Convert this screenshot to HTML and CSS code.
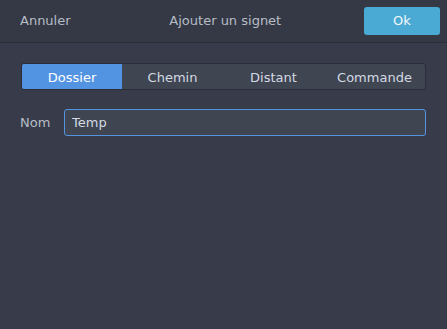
FILE: index.html
```html
<!DOCTYPE html>
<html lang="fr">
<head>
  <meta charset="UTF-8">
  <title>Ajouter un signet</title>
  <link rel="stylesheet" href="styles.css">
</head>
<body>

  <div class="dialogo">
    <div class="cabecera">
      <button class="btn-texto">Annuler</button>
      <div class="titulo">Ajouter un signet</div>
      <button class="btn-ok">Ok</button>
    </div>

    <div class="contenido">
      <div class="selector">
        <button class="opcion activa">Dossier</button>
        <button class="opcion">Chemin</button>
        <button class="opcion">Distant</button>
        <button class="opcion">Commande</button>
      </div>

      <div class="fila">
        <label class="etiqueta">Nom</label>
        <input class="campo" type="text" value="Temp">
      </div>
    </div>
  </div>

</body>
</html>
```

FILE: styles.css
```css
body {
  margin: 0;
  font-family: "DejaVu Sans", sans-serif;
  font-size: 13px;
  background-color: #383c4a;
  color: #d3dae3;
}

.dialogo {
  width: 447px;
  height: 329px;
}

.cabecera {
  display: flex;
  align-items: center;
  justify-content: space-between;
  height: 43px;
  padding: 0 7px 1px 20px;
  background-color: #353945;
  border-bottom: 1px solid #2b2e39;
  box-sizing: border-box;
}

.btn-texto {
  background: none;
  border: none;
  padding: 0;
  font: inherit;
  color: #b6bcc6;
}

.titulo {
  color: #b6bcc6;
  margin-left: 16px;
}

.btn-ok {
  width: 76px;
  height: 28px;
  border: none;
  border-radius: 3px;
  background-color: #4aaad4;
  color: #f5f8fa;
  font: inherit;
}

.contenido {
  padding: 20px 21px 0 21px;
}

.selector {
  display: flex;
  height: 27px;
  border: 1px solid #2b2e39;
  border-radius: 3px;
  background-color: #404552;
  overflow: hidden;
  box-sizing: border-box;
}

.opcion {
  flex: 1;
  border: none;
  background: none;
  font: inherit;
  color: #d3dae3;
  padding: 0;
  line-height: 27px;
}

.opcion.activa {
  flex: 0 0 100px;
  background-color: #5294e2;
  color: #ffffff;
}

.fila {
  display: flex;
  align-items: center;
  margin-top: 19px;
}

.etiqueta {
  width: 44px;
  margin-left: -1px;
  color: #b6bcc6;
}

.campo {
  flex: 1;
  height: 27px;
  box-sizing: border-box;
  border: 1px solid #5294e2;
  border-radius: 3px;
  background-color: #404552;
  color: #d3dae3;
  font: inherit;
  padding: 0 7px;
  outline: none;
}
```
